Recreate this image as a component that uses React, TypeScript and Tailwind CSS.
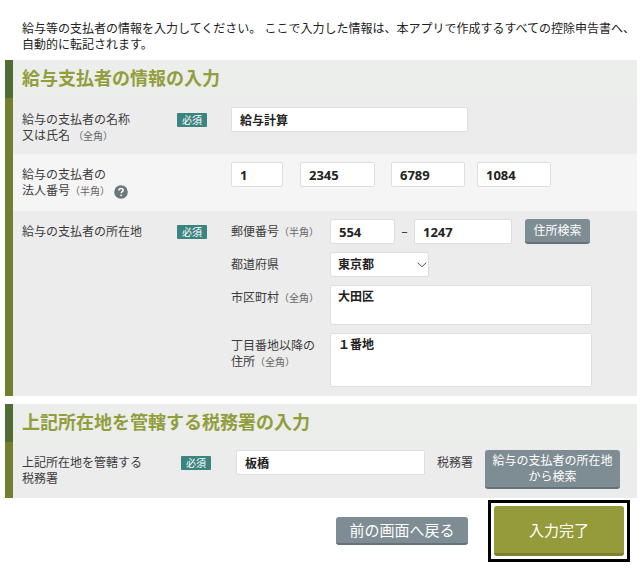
import React, { ReactNode } from 'react';
import { clsx } from 'clsx';

const fieldClass =
  'h-[25px] min-w-0 rounded-[2px] border border-[#dedede] bg-white px-2 text-xs font-bold text-[#222]';

const digitClass =
  'h-[25px] min-w-0 rounded-[2px] border border-[#dedede] bg-white px-2 text-[13px] font-bold text-[#222]';

const areaClass =
  'block w-full max-w-[262px] resize-none rounded-[2px] border border-[#dedede] bg-white px-[7px] py-[3px] text-xs leading-4 font-bold text-[#222]';

const grayButtonClass =
  'rounded-[3px] border-b-2 border-[#65727a] bg-[#7e8c93] text-white hover:bg-[#8b989f]';

function Note({ children }: { children: ReactNode }) {
  return <span className="text-[10px] text-[#666]">{children}</span>;
}

function RequiredBadge() {
  return (
    <span className="mt-0.5 flex h-3.5 w-[30px] items-center justify-center rounded-[1px] bg-[#3c8480] text-[10px] leading-none text-white">
      必須
    </span>
  );
}

interface SectionProps {
  title: string;
  className?: string;
  children: ReactNode;
}

function Section({ title, className, children }: SectionProps) {
  return (
    <section className={clsx('mr-[5px] ml-[5px]', className)}>
      <h2 className="h-[38px] border-l-8 border-[#4f6d33] bg-[#eceeec] pl-[9px] text-lg leading-9 font-bold text-[#929d3c]">
        {title}
      </h2>
      <div className="border-l-8 border-[#737f2d]">{children}</div>
    </section>
  );
}

interface RowProps {
  label: ReactNode;
  required?: boolean;
  className?: string;
  children: ReactNode;
}

function Row({ label, required, className, children }: RowProps) {
  return (
    <div className={clsx('flex items-start pr-4 pl-[9px]', className)}>
      <div className="w-[155px] shrink-0 pt-[5px] leading-4">{label}</div>
      <div className="w-[54px] shrink-0 pt-1">{required && <RequiredBadge />}</div>
      <div className="min-w-0 flex-1">{children}</div>
    </div>
  );
}

function HelpButton() {
  return (
    <button type="button" aria-label="法人番号について" className="ml-1 block h-3.5 w-3.5">
      <svg viewBox="0 0 14 14" className="h-3.5 w-3.5">
        <circle cx="7" cy="7" r="6.8" fill="#68777a" />
        <path
          d="M4.9 5.5c0-1.3.9-2.1 2.2-2.1 1.2 0 2.1.7 2.1 1.8 0 1.4-2 1.5-2 3"
          fill="none"
          stroke="#fff"
          strokeWidth="1.5"
        />
        <circle cx="7.2" cy="10.3" r=".9" fill="#fff" />
      </svg>
    </button>
  );
}

const corporateNumber = [
  { value: '1', className: 'mr-[17px] w-[52px]' },
  { value: '2345', className: 'mr-4 w-[75px]' },
  { value: '6789', className: 'mr-3 w-[74px]' },
  { value: '1084', className: 'w-[74px]' },
];

export default function App() {
  return (
    <main className="bg-white pt-[21px] pb-5 font-['Noto_Sans','Noto_Sans_CJK_JP',sans-serif] text-xs text-[#3c3c3c]">
      <p className="pl-[22px] leading-4 text-[#222]">
        給与等の支払者の情報を入力してください。 ここで入力した情報は、本アプリで作成するすべての控除申告書へ、
        <br />
        自動的に転記されます。
      </p>

      <form onSubmit={(e) => e.preventDefault()}>
        <Section title="給与支払者の情報の入力" className="mt-[7px]">
          <Row
            required
            className="bg-[#ececec] pt-[9px] pb-2.5"
            label={
              <label htmlFor="payer-name">
                給与の支払者の名称
                <br />
                又は氏名 <Note>（全角）</Note>
              </label>
            }
          >
            <input
              id="payer-name"
              type="text"
              defaultValue="給与計算"
              className={clsx(fieldClass, 'block w-full max-w-[237px]')}
            />
          </Row>

          <Row
            className="bg-[#f5f5f5] pt-2 pb-3"
            label={
              <div className="flex items-end">
                <label htmlFor="corporate-0">
                  給与の支払者の
                  <br />
                  法人番号<Note>（半角）</Note>
                </label>
                <HelpButton />
              </div>
            }
          >
            <div className="flex">
              {corporateNumber.map((part, index) => (
                <input
                  key={index}
                  id={`corporate-${index}`}
                  type="text"
                  aria-label={`法人番号 ${index + 1}`}
                  defaultValue={part.value}
                  className={clsx(digitClass, part.className)}
                />
              ))}
            </div>
          </Row>

          <Row required className="bg-[#ececec] pt-2 pb-[9px]" label="給与の支払者の所在地">
            <div className="grid grid-cols-[99px_1fr] items-start gap-y-2 leading-4">
              <label htmlFor="postal-1" className="pt-[5px]">
                郵便番号<Note>（半角）</Note>
              </label>
              <div className="flex items-center">
                <input
                  id="postal-1"
                  type="text"
                  defaultValue="554"
                  className={clsx(digitClass, 'w-[65px]')}
                />
                <span className="w-[19px] text-center">–</span>
                <input
                  type="text"
                  aria-label="郵便番号 下4桁"
                  defaultValue="1247"
                  className={clsx(digitClass, 'w-[98px]')}
                />
                <button type="button" className={clsx(grayButtonClass, 'ml-[13px] h-[25px] w-[65px]')}>
                  住所検索
                </button>
              </div>

              <label htmlFor="prefecture" className="pt-[5px]">
                都道府県
              </label>
              <div className="relative w-[99px]">
                <select
                  id="prefecture"
                  defaultValue="東京都"
                  className="block h-[25px] w-full appearance-none rounded-[2px] border border-[#dedede] bg-white px-[7px] text-xs font-bold text-[#222]"
                >
                  <option>東京都</option>
                </select>
                <svg
                  viewBox="0 0 10 6"
                  className="pointer-events-none absolute top-2.5 right-0.5 h-1.5 w-2.5"
                  fill="none"
                  stroke="#444"
                >
                  <path d="M.8.6 5 4.8 9.2.6" />
                </svg>
              </div>

              <label htmlFor="city" className="pt-[5px]">
                市区町村<Note>（全角）</Note>
              </label>
              <textarea id="city" defaultValue="大田区" className={clsx(areaClass, 'h-10')} />

              <label htmlFor="street" className="pt-[5px]">
                丁目番地以降の
                <br />
                住所<Note>（全角）</Note>
              </label>
              <textarea id="street" defaultValue="１番地" className={clsx(areaClass, 'h-[54px]')} />
            </div>
          </Row>
        </Section>

        <Section title="上記所在地を管轄する税務署の入力" className="mt-2">
          <div className="flex items-start bg-[#ececec] pt-2 pr-[17px] pb-[9px] pl-[9px]">
            <label htmlFor="tax-office" className="w-[159px] shrink-0 pt-[5px] leading-4">
              上記所在地を管轄する
              <br />
              税務署
            </label>
            <div className="w-[55px] shrink-0 pt-1">
              <RequiredBadge />
            </div>
            <input
              id="tax-office"
              type="text"
              defaultValue="板橋"
              className={clsx(fieldClass, 'w-full max-w-[189px]')}
            />
            <span className="mr-3 ml-3 shrink-0 pt-[5px] leading-4">税務署</span>
            <button
              type="button"
              className={clsx(grayButtonClass, 'h-[39px] w-[135px] shrink-0 leading-4')}
            >
              給与の支払者の所在地
              <br />
              から検索
            </button>
          </div>
        </Section>

        <div className="mt-0.5 mr-3 flex items-center justify-end gap-5">
          <button type="button" className={clsx(grayButtonClass, 'h-7 w-[132px] text-[15px] leading-none')}>
            前の画面へ戻る
          </button>
          <div className="border-[3px] border-black p-[3px]">
            <button
              type="submit"
              className="block h-[50px] w-[130px] rounded-[3px] border-b-[3px] border-[#7b8030] bg-[#959a3a] text-[15px] text-white hover:bg-[#a1a645]"
            >
              入力完了
            </button>
          </div>
        </div>
      </form>
    </main>
  );
}
